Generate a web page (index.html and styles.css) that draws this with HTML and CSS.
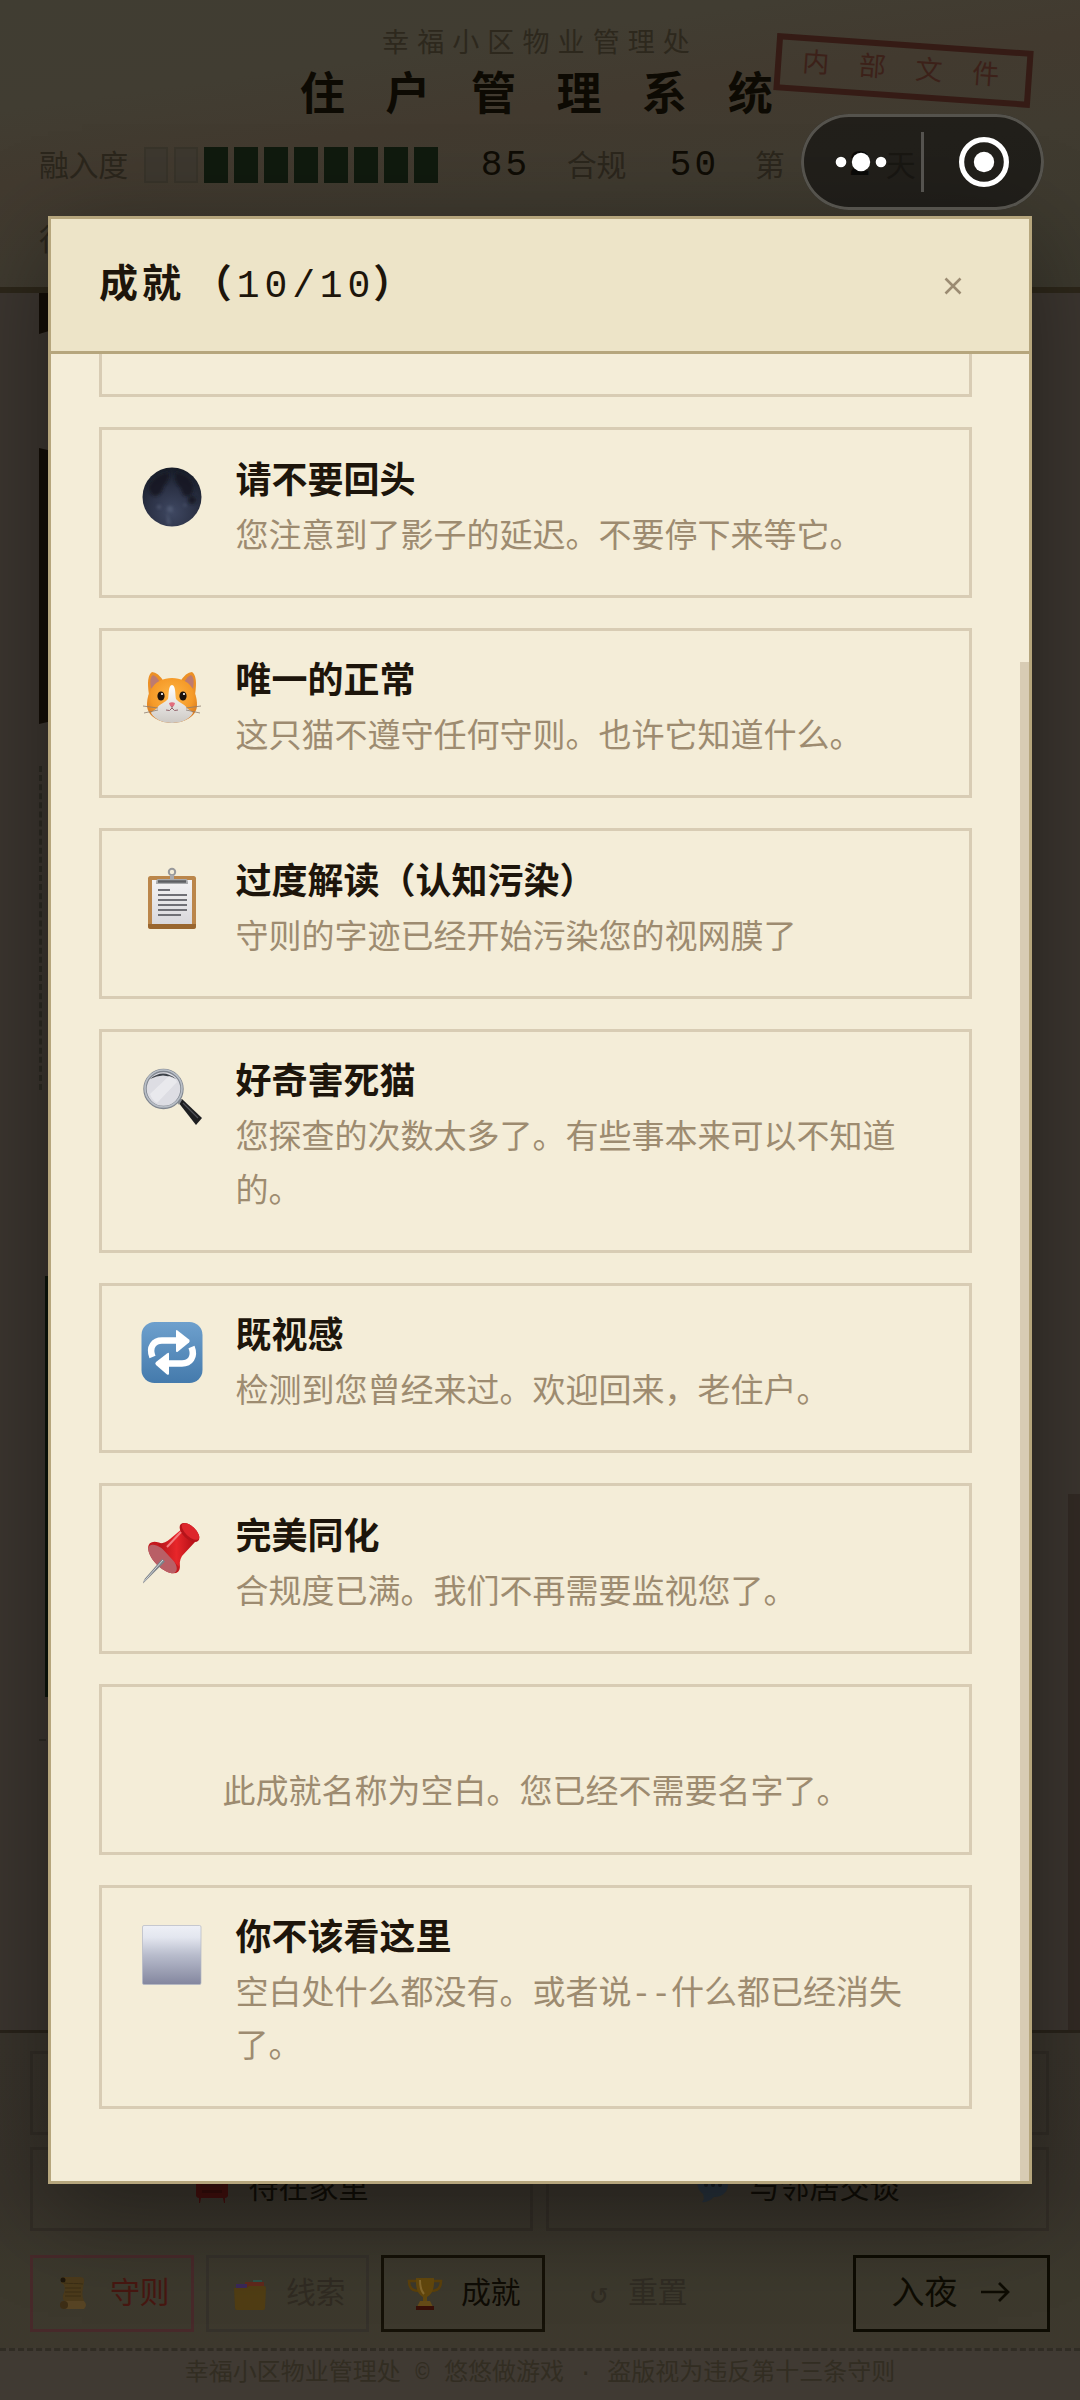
FILE: index.html
```
<!DOCTYPE html>
<html lang="zh-CN">
<head>
<meta charset="utf-8">
<title>住户管理系统</title>
<link rel="stylesheet" href="styles.css">
</head>
<body>
<div class="page">
  <header class="top">
    <div class="office">幸福小区物业管理处</div>
    <h1 class="system">住户管理系统</h1>
    <div class="stats">
      <span class="stat-label">融入度</span>
      <span class="meter"><i></i><i></i><i class="on"></i><i class="on"></i><i class="on"></i><i class="on"></i><i class="on"></i><i class="on"></i><i class="on"></i><i class="on"></i></span>
      <b class="num num-blend">85</b>
      <span class="stat-label rule">合规</span>
      <b class="num num-rule">50</b>
      <span class="stat-label day">第</span>
      <b class="num num-day">2</b>
      <span class="stat-label">天</span>
    </div>
    <div class="action-row">行</div>
    <div class="stamp">内部文件</div>
  </header>
  <main class="feed">
    <div class="feed-list">
      <div class="slab slab-a"></div>
      <div class="slab slab-b"></div>
      <div class="dash"></div>
      <div class="quote"></div>
      <div class="tick"></div>
    </div>
    <div class="feed-thumb"></div>
  </main>
  <section class="panel">
    <div class="choices">
      <div class="choice"></div>
      <div class="choice"></div>
      <div class="choice">
        <svg class="em" viewBox="0 0 34 34"><path d="M6 3q11-4 22 0v17H6z" fill="#3c110e"/><path d="M1 12q5-2 6 6h20q1-8 6-6v15q-1 2-3 2v5h-1l-1-5H6l-1 5H4v-5q-2 0-3-2z" fill="#420f0d"/><path d="M7 21h20v3H7z" fill="#350c0a"/></svg>
        <span>待在家里</span>
      </div>
      <div class="choice">
        <svg class="em" viewBox="0 0 34 34"><path d="M17 3c20 0 20 25 1 25q-6 6-12 5 3-3 1-8C-4 16 3 3 17 3z" fill="#27313b"/><g fill="#181d22"><circle cx="10" cy="16" r="2"/><circle cx="17" cy="16" r="2"/><circle cx="24" cy="16" r="2"/></g></svg>
        <span>与邻居交谈</span>
      </div>
    </div>
    <div class="tools">
      <div class="tool tool-rules">
        <svg class="em" viewBox="0 0 34 34"><path d="M4 3q-1-3 3-3h16q5 0 4 5c-1 8-3 11 0 19H8q-3-1-2-6C9 12 8 7 4 6z" fill="#4b3a1b"/><path d="M7 6c6 1 13 0 19 1M8 11h16M8 15h16M8 19h16" stroke="#3a2d15" fill="none"/><path d="M5 24h22q4 4 0 8H6q-4-3-1-8z" fill="#574424"/><circle cx="7" cy="28" r="4" fill="#3d2e16"/><circle cx="6" cy="3" r="2.500" fill="#1e170c"/></svg>
        <span>守则</span>
      </div>
      <div class="tool tool-clues">
        <svg class="em" viewBox="0 0 34 34"><path d="M20 3h9v5h-9z" fill="#2b5248"/><path d="M12 5h19v5H12z" fill="#60281c"/><path d="M3 7h11v6H3z" fill="#3b2858"/><path d="M1 11h12l3-2h15q2 0 2 2l-1 20q0 2-2 2H4q-2 0-2-2z" fill="#503d14"/></svg>
        <span>线索</span>
      </div>
      <div class="tool tool-awards">
        <svg class="em" viewBox="0 0 34 34"><path d="M9 4H1q0 10 10 10M25 4h8q0 10-10 10" fill="none" stroke="#5b400b" stroke-width="2.500"/><path d="M8 1h18q1 15-7 19v5h-4v-5Q7 16 8 1z" fill="#62470d"/><path d="M12 3q0 10 4 14" stroke="#85682c" stroke-width="2" fill="none"/><path d="M12 24h10l3 6H9z" fill="#654b17"/><path d="M8 29h18v4H8z" fill="#371008"/></svg>
        <span>成就</span>
      </div>
      <div class="tool tool-reset"><span class="loop">↺</span><span>重置</span></div>
      <div class="night"><span>入夜</span><svg class="arrow" viewBox="0 0 30 30"><path d="M1 15h27M19 6l9 9-9 9" fill="none" stroke="#0e0c03" stroke-width="2.700"/></svg></div>
    </div>
  </section>
  <footer class="foot">幸福小区物业管理处 © 悠悠做游戏 · 盗版视为违反第十三条守则</footer>
</div>

<div class="modal">
  <div class="modal-head">
    <h2>成就<b>（</b><span>10/10</span>）</h2>
    <svg class="close" viewBox="0 0 18 18"><path d="M1.500 1.500l15 15M16.500 1.500l-15 15" stroke="#9b8b72" stroke-width="2.600"/></svg>
  </div>
  <div class="modal-body">
    <div class="card card-cut"></div>
    <div class="card">
      <svg class="icon" viewBox="0 0 60 60">
        <defs><radialGradient id="moon" cx=".5" cy=".75" r=".75"><stop offset="0" stop-color="#3f4862"/><stop offset=".55" stop-color="#2b3145"/><stop offset="1" stop-color="#171c27"/></radialGradient><filter id="soft"><feGaussianBlur stdDeviation="1.800"/></filter></defs>
        <circle cx="30" cy="30" r="29.500" fill="url(#moon)"/>
        <g fill="#121920" opacity=".85" filter="url(#soft)"><path d="M7 18q8-12 20-13 1 8-5 14-2 10-10 10-6-3-5-11z"/><path d="M33 5q13 1 18 12 2 8-3 12-8 2-9-7-8-7-6-17z"/><circle cx="50" cy="33" r="4"/></g>
        <g fill="#566079" opacity=".7" filter="url(#soft)"><circle cx="17" cy="40" r="2"/><circle cx="28" cy="42" r="3"/><circle cx="43" cy="38" r="1.500"/><path d="M25 45l4 12h-4z"/></g>
      </svg>
      <div class="txt"><h3>请不要回头</h3><p>您注意到了影子的延迟。不要停下来等它。</p></div>
    </div>
    <div class="card">
      <svg class="icon" viewBox="0 0 60 60">
        <defs><radialGradient id="fur" cx=".5" cy=".4" r=".6"><stop offset="0" stop-color="#ffb545"/><stop offset=".7" stop-color="#f59a28"/><stop offset="1" stop-color="#d87a20"/></radialGradient><linearGradient id="chin" x2="0" y2="1"><stop offset="0" stop-color="#fff"/><stop offset="1" stop-color="#cdc9c4"/></linearGradient></defs>
        <path d="M7 27Q4 8 10 4q6 0 12 10zM53 27Q56 8 50 4q-6 0-12 10z" fill="#ec9026"/>
        <path d="M9 21Q7 9 11 7q4 1 7 8zM51 21Q53 9 49 7q-4 1-7 8z" fill="#bd7b70"/>
        <path d="M30 10c18 0 25 14 25 27 0 12-14 18-25 18S5 49 5 37c0-13 7-27 25-27z" fill="url(#fur)"/>
        <path d="M30 17c4 0 3 10 4 14 3 4 9 5 11 9 3 3 5 3 6 5-4 7-13 10-21 10S13 52 9 45c1-2 3-2 6-5 2-4 8-5 11-9 1-4 0-14 4-14z" fill="url(#chin)"/>
        <ellipse cx="19" cy="28" rx="3.600" ry="4.600" fill="#1c120c"/><ellipse cx="41" cy="28" rx="3.600" ry="4.600" fill="#1c120c"/><circle cx="20" cy="26" r="1.100" fill="#fff"/><circle cx="42" cy="26" r="1.100" fill="#fff"/>
        <path d="M27 35q3-1.500 6 0-1 4-3 4t-3-4z" fill="#e26d7d"/><path d="M30 38v2q-2 4-6 2m6-2q2 4 6 2" stroke="#93646a" fill="none"/>
        <path d="M1 38l15 2M2 45l14-3M59 38l-15 2M58 45l-14-3" stroke="#8b7b6e" stroke-width=".8"/>
      </svg>
      <div class="txt"><h3>唯一的正常</h3><p>这只猫不遵守任何守则。也许它知道什么。</p></div>
    </div>
    <div class="card">
      <svg class="icon" viewBox="0 0 60 60">
        <defs><linearGradient id="paper" x2="0" y2="1"><stop offset="0" stop-color="#f4f3f4"/><stop offset="1" stop-color="#d9d8dc"/></linearGradient></defs>
        <rect x="6" y="8" width="48" height="53" rx="2.500" fill="#bb864a"/><path d="M6 56h48v2q0 3-3 3H9q-3 0-3-3z" fill="#99662f"/>
        <rect x="10" y="12" width="40" height="44" fill="url(#paper)"/>
        <circle cx="30" cy="4" r="3.200" fill="none" stroke="#98999b" stroke-width="2"/><path d="M28 7h4v4h12q2 0 2 5H14q0-5 2-5h12z" fill="#a9aaad"/><path d="M16 13.500h28" stroke="#5f6064" stroke-width="2.500"/>
        <path d="M16 22h12M16 27h29M16 32h29M16 37h29M16 42h29M16 47h23" stroke="#707076" stroke-width="2"/>
      </svg>
      <div class="txt"><h3>过度解读（认知污染）</h3><p>守则的字迹已经开始污染您的视网膜了</p></div>
    </div>
    <div class="card tall">
      <svg class="icon" viewBox="0 0 60 60">
        <path d="M36 33l4-3 20 19-6 7z" fill="#1d1e20"/><path d="M34 31l3 5 3-5-3-3z" fill="#8a8d92"/><path d="M41 34l15 15" stroke="#505257" stroke-width="1.200"/>
        <circle cx="21.500" cy="20" r="18.500" fill="#dddde3" stroke="#80868f" stroke-width="3.400"/><circle cx="21.500" cy="19.500" r="18.500" fill="none" stroke="#b9bfc7" stroke-width="1.600"/>
        <path d="M8 10q13-11 26 0-13-7-26 0z" fill="#3d4249"/><path d="M8 25L27 7q6 1 8 6L15 34q-5-3-7-9z" fill="#efeff2" opacity=".65"/>
      </svg>
      <div class="txt"><h3>好奇害死猫</h3><p>您探查的次数太多了。有些事本来可以不知道的。</p></div>
    </div>
    <div class="card">
      <svg class="icon" viewBox="0 0 60 60">
        <defs><linearGradient id="blue" x2="0" y2="1"><stop offset="0" stop-color="#6ea0cd"/><stop offset="1" stop-color="#447aac"/></linearGradient></defs>
        <rect x="-.5" y="-1" width="61" height="61" rx="13" fill="url(#blue)"/>
        <path d="M10.500 34C6.500 24 12 17.500 20 17.500h14" fill="none" stroke="#fff" stroke-width="6.500"/><path d="M34 8q0-1.500 1.500-.5L47 16.500q1.500 1.500 0 3L36 28.500q-2 1.500-2-1z" fill="#fff"/>
        <path d="M49.500 24C53.500 34 48 40.500 40 40.500H26" fill="none" stroke="#fff" stroke-width="6.500"/><path d="M27 30.500q0-1.500-2 0L14 39q-1.500 1.500 0 3l11 9.500q2 1 2-1z" fill="#fff"/>
      </svg>
      <div class="txt"><h3>既视感</h3><p>检测到您曾经来过。欢迎回来，老住户。</p></div>
    </div>
    <div class="card">
      <svg class="icon" viewBox="0 0 60 60">
        <defs><linearGradient id="red"><stop offset="0" stop-color="#b3161a"/><stop offset=".5" stop-color="#e8262a"/><stop offset="1" stop-color="#b30f16"/></linearGradient></defs>
        <ellipse cx="22" cy="34.500" rx="20" ry="10" transform="rotate(45 22 34.500)" fill="#c5191e"/>
        <ellipse cx="20.500" cy="36" rx="18.500" ry="8" transform="rotate(45 20.500 36)" fill="#b95f66"/>
        <path d="M16 21q8-1 12-5L41 5l12 14-13 14q-3 5-2 12z" fill="url(#red)"/>
        <ellipse cx="47.500" cy="9.500" rx="12" ry="6.500" transform="rotate(43 47.500 9.500)" fill="#b5141a"/><ellipse cx="48.500" cy="8.500" rx="11" ry="5" transform="rotate(43 48.500 8.500)" fill="#dd262b"/>
        <path d="M25 24L39 9" stroke="#f37c7e" stroke-width="2"/>
        <path d="M20 36l3 2.500L1 60.500q0-2 2-5z" fill="#7c8289"/><path d="M21 37L2 58.500" stroke="#d1d5da"/>
      </svg>
      <div class="txt"><h3>完美同化</h3><p>合规度已满。我们不再需要监视您了。</p></div>
    </div>
    <div class="card">
      <div class="icon icon-blank"></div>
      <div class="txt"><h3>&nbsp;</h3><p>此成就名称为空白。您已经不需要名字了。</p></div>
    </div>
    <div class="card tall">
      <svg class="icon" viewBox="0 0 60 60">
        <defs><linearGradient id="steel" x2="0" y2="1"><stop offset="0" stop-color="#eef0f6"/><stop offset=".2" stop-color="#e3e6ef"/><stop offset=".5" stop-color="#b8bccc"/><stop offset="1" stop-color="#83869e"/></linearGradient></defs>
        <rect x=".5" y=".5" width="58.500" height="59" rx="1.500" fill="url(#steel)" stroke="#b3b7c4" stroke-width=".7"/>
      </svg>
      <div class="txt"><h3>你不该看这里</h3><p>空白处什么都没有。或者说--什么都已经消失了。</p></div>
    </div>
    <div class="modal-thumb"></div>
  </div>
</div>

<div class="capsule">
  <svg viewBox="0 0 243 96"><g fill="#fff"><circle cx="40" cy="48" r="5.300"/><circle cx="60" cy="48" r="9.200"/><circle cx="80" cy="48" r="5.300"/><circle cx="183" cy="48" r="10.200"/></g><path d="M121.500 18v60" stroke="#55534f" stroke-width="3"/><circle cx="183" cy="48" r="22.400" fill="none" stroke="#fff" stroke-width="5.200"/></svg>
</div>
</body>
</html>
```
FILE: styles.css
```
* { box-sizing: border-box; margin: 0; padding: 0; }
body {
  width: 1080px; height: 2400px; overflow: hidden; background: #39342e;
  font-family: "Liberation Mono", "Noto Sans CJK SC", monospace;
}
h1, h2, h3, b, i { font-weight: normal; font-style: normal; }
svg { display: block; flex: none; overflow: visible; }
.page { width: 1080px; height: 2400px; display: flex; flex-direction: column; }

.top {
  position: relative; height: 293px; padding-top: 25px; overflow: hidden;
  border-bottom: 6px solid #2d271a;
  background: linear-gradient(172deg, #403d32 0%, #413d32 25%, #423a2f 42%, #403b30 62%, #3c392e 100%);
}
.office { height: 41px; line-height: 41px; text-align: center; font-size: 27px; letter-spacing: 8.1px; color: #2d281d; }
.system {
  height: 64px; line-height: 66px; padding-left: 33px; text-align: center; white-space: nowrap;
  font-size: 45px; font-weight: bold; letter-spacing: 40.6px; color: #0d0a03;
}
.stats { height: 74px; margin-top: -2px; padding-left: 39px; display: flex; align-items: center; font-size: 30px; color: #2b261c; white-space: nowrap; }
.stat-label { letter-spacing: -.4px; color: #2b261c; padding-bottom: 4px; }
.meter { display: flex; gap: 6px; margin-left: 16px; }
.meter i { width: 24px; height: 36px; border: 2px solid #38342a; background: #3d382f; }
.meter i.on { border: 0; background: #101a0e; }
.num { font-size: 36px; letter-spacing: 3px; color: #0f0c05; }
.num-blend { width: 86px; margin-left: 43px; }
.rule { width: 103px; }
.num-rule { width: 85px; }
.day { width: 94px; }
.num-day { width: 37px; font-weight: bold; color: #0a0805; }
.action-row { padding-left: 39px; line-height: 80px; font-size: 30px; color: #29251c; }
.stamp {
  position: absolute; left: 775px; top: 42px; width: 257px; height: 57px; border: 6px solid #351b15;
  transform: rotate(4deg); padding-left: 21px; line-height: 46px; white-space: nowrap;
  font-size: 27px; letter-spacing: 29.7px; color: #3c2119;
}

.feed { height: 1737px; display: flex; justify-content: space-between; background: #3c3630; }
.feed-list { padding-left: 39px; }
.slab { width: 300px; background: #140e07; }
.slab-a { height: 41px; clip-path: polygon(0 0, 100% 0, 100% 0, 30px 32px, 0 100%); }
.slab-b { height: 276px; margin-top: 114px; clip-path: polygon(0 0, 30px 7px, 30px 269px, 0 100%); }
.dash { height: 324px; margin-top: 42px; border-left: 3px dashed #2c2a23; }
.quote { height: 421px; margin: 186px 0 0 6px; border-left: 3px solid #0c150b; }
.tick { height: 2px; width: 7px; margin-top: 42px; background: #2e2b24; }
.feed-thumb { width: 12px; margin-top: 1201px; background: #332b25; }

.panel {
  height: 318px; padding: 18px 30px 0; border-top: 3px solid #29231a;
  background: linear-gradient(#39342c, #38332b 50%, #3c392d 80%, #3d382d);
}
.choices { display: grid; grid-template-columns: 503px 503px; grid-auto-rows: 84px; gap: 12px 13px; }
.choice {
  display: flex; align-items: center; justify-content: center; gap: 20px; padding-bottom: 6px;
  border: 3px solid #322d26; font-size: 30px; color: #100d06; white-space: nowrap;
}
.choice span { margin-top: -3px; }
.em { width: 34px; height: 34px; }
.tools { display: flex; margin-top: 24px; height: 77px; gap: 12px; font-size: 30px; white-space: nowrap; }
.tool { width: 164px; display: flex; align-items: center; gap: 19px; padding-left: 24px; border: 3px solid; letter-spacing: -.4px; }
.tool span, .night span { padding-bottom: 8px; }
.tool-rules { color: #471711; border-color: #47292a; }
.tool-clues { width: 163px; color: #302b22; border-color: #35312a; }
.tool-awards { color: #0f0c05; border-color: #151107; }
.tool-reset { color: #302c23; border-color: transparent; gap: 20px; padding-left: 30px; }
.tool-reset .loop { font-size: 30px; width: 18px; padding-bottom: 0; }
.night {
  width: 197px; margin-left: auto; display: flex; align-items: center; justify-content: center; gap: 22px;
  border: 3px solid #0e0c03; font-size: 33px; color: #0e0c03; padding-right: 2px;
}
.arrow { width: 30px; height: 30px; margin-top: -3px; }
.foot {
  flex: 1; border-top: 3px dashed #302c24; background: #403a33; text-align: center;
  font-size: 24px; line-height: 46px; color: #322d22; white-space: nowrap;
}

.modal {
  position: absolute; left: 48px; top: 216px; width: 984px; height: 1968px; border: 3px solid #b6a67d;
  display: flex; flex-direction: column; background: #f4edd8; box-shadow: 0 24px 96px rgba(0, 0, 0, .4);
}
.modal-head {
  height: 135px; flex: none; display: flex; align-items: center; justify-content: space-between;
  padding: 2px 67px 0 48px; background: #ede4c8; border-bottom: 3px solid #b6a67d;
}
.modal-head h2 { font-size: 39px; line-height: 60px; letter-spacing: 3.9px; font-weight: bold; color: #1d150b; padding-top: 2px; }
.modal-head h2 b { font-weight: bold; margin-left: 8px; }
.modal-head h2 span { font-size: 38px; font-weight: normal; letter-spacing: 4.9px; margin-left: 1px; margin-right: -2px; }
.close { width: 18px; height: 18px; }
.modal-body { position: relative; flex: 1; overflow: hidden; padding: 0 57px 0 48px; }
.card {
  width: 873px; height: 170.6px; margin-bottom: 30px; border: 3px solid #d8ccb4;
  display: flex; padding: 27px 24px 0 39.5px;
}
.card-cut { height: 43px; border-top: 0; }
.tall { height: 224px; }
.icon { width: 60px; height: 60px; margin-top: 10px; }
.icon-blank { width: 47px; }
.txt { flex: 1; margin-left: 34px; padding-top: 3.5px; }
.txt h3 { height: 46px; line-height: 46px; font-size: 36px; font-weight: bold; color: #1d150b; }
.txt p { margin-top: 5px; font-size: 33px; line-height: 53.3px; color: #9d8b70; white-space: pre-wrap; }
.modal-thumb { position: absolute; right: 0; top: 308px; bottom: 0; width: 9px; background: #d8ccb4; }

.capsule {
  position: absolute; left: 801px; top: 114px; width: 243px; height: 96px; border-radius: 48px;
  background: rgba(10, 10, 10, .57); box-shadow: inset 0 0 0 3px #55534d;
}
```
